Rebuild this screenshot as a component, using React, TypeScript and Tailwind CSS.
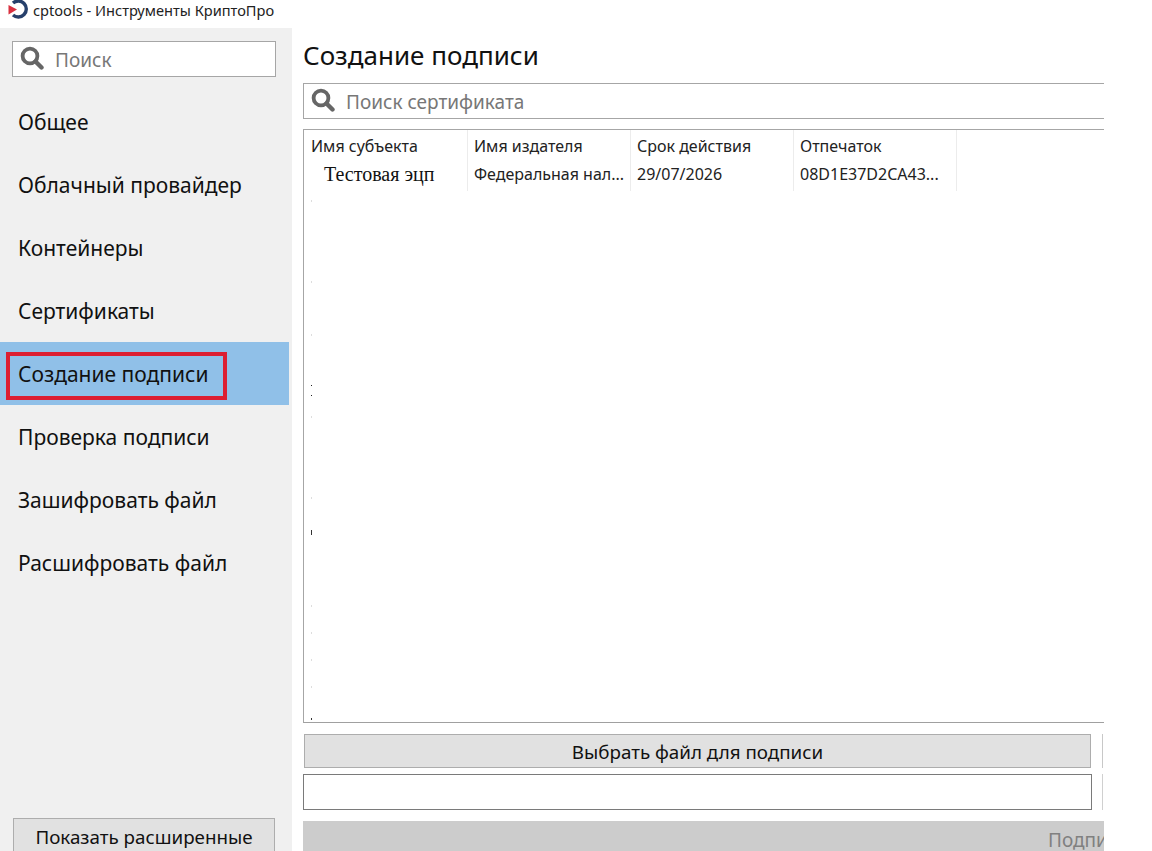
import React from 'react';

const navItems = [
  'Общее',
  'Облачный провайдер',
  'Контейнеры',
  'Сертификаты',
  'Создание подписи',
  'Проверка подписи',
  'Зашифровать файл',
  'Расшифровать файл',
];

const columns = [
  { title: 'Имя субъекта', value: 'Тестовая эцп', serif: true },
  { title: 'Имя издателя', value: 'Федеральная нал...', serif: false },
  { title: 'Срок действия', value: '29/07/2026', serif: false },
  { title: 'Отпечаток', value: '08D1E37D2CA43...', serif: false },
];

// stray marks along the left edge of the table
const specks = [
  { top: 70, height: 2, color: '#dddddd' },
  { top: 151, height: 2, color: '#dddddd' },
  { top: 204, height: 2, color: '#dddddd' },
  { top: 255, height: 1, color: '#222222' },
  { top: 265, height: 1, color: '#222222' },
  { top: 286, height: 2, color: '#dddddd' },
  { top: 367, height: 2, color: '#dddddd' },
  { top: 400, height: 5, color: '#333333' },
  { top: 475, height: 2, color: '#dddddd' },
  { top: 502, height: 2, color: '#dddddd' },
  { top: 529, height: 2, color: '#dddddd' },
  { top: 556, height: 2, color: '#dddddd' },
  { top: 588, height: 2, color: '#333333' },
];

function SearchIcon() {
  return (
    <svg width="24" height="24" viewBox="0 0 24 24" fill="none" className="shrink-0 -mt-[3px]">
      <circle cx="10" cy="10" r="7.4" stroke="#666666" strokeWidth="3.8" />
      <line x1="15.5" y1="15.5" x2="21.5" y2="21.5" stroke="#666666" strokeWidth="4.4" strokeLinecap="round" />
    </svg>
  );
}

function AppLogo() {
  return (
    <svg width="22" height="20" viewBox="0 0 22 20" fill="none" className="shrink-0">
      <path d="M6 3 A8 8 0 1 1 6 15" stroke="#27406b" strokeWidth="3.4" fill="none" />
      <path d="M1.5 5 L10 9.5 L1.5 14.5 Z" fill="#d9303f" />
    </svg>
  );
}

export default function App() {
  return (
    <div className="w-[1152px] h-[851px] overflow-hidden bg-white text-[#111111] font-['Noto_Sans','Open_Sans',sans-serif]">
      <div className="h-[28px] flex items-start pl-[7px] gap-[4px] text-[14.6px] leading-[20px] text-[#222222]">
        <AppLogo />
        <span>cptools - Инструменты КриптоПро</span>
      </div>

      <div className="flex h-[823px]">
        <aside className="w-[292px] shrink-0 bg-[#f0f0f0] flex flex-col">
          <div className="mt-[13px] mx-[12px] w-[264px] h-[36px] bg-white border border-[#a6a6a6] flex items-center pl-[7px] gap-[11px]">
            <SearchIcon />
            <span className="pt-[2px] text-[19px] text-[#777777]">Поиск</span>
          </div>

          <nav className="mt-[13px] flex flex-col">
            {navItems.map((item, i) => (
              <div
                key={item}
                className={
                  i === 4
                    ? 'relative h-[63px] w-[289px] bg-[#90c0e8] flex items-center pl-[18px] pt-[2px] text-[21px]'
                    : 'h-[63px] flex items-center pl-[18px] pt-[2px] text-[21px]'
                }
              >
                {item}
                {i === 4 && (
                  <div className="absolute left-[6px] top-[10px] w-[221px] h-[48px] border-[4px] border-[#dc1e32]" />
                )}
              </div>
            ))}
          </nav>

          <div className="mt-auto mx-[13px] w-[262px] h-[34px] -mb-[1px] bg-[#e1e1e1] border border-[#adadad] border-b-0 flex items-start justify-center pt-[4px] text-[18.8px] leading-[28px]">
            Показать расширенные
          </div>
        </aside>

        <main className="w-[812px] shrink-0 pl-[11px] overflow-hidden flex flex-col">
          <h1 className="h-[55px] shrink-0 text-[26px] leading-[54px] font-normal">Создание подписи</h1>

          <div className="w-[900px] h-[36px] shrink-0 border border-[#a6a6a6] flex items-center pl-[7px] gap-[11px]">
            <SearchIcon />
            <span className="pt-[2px] text-[19px] text-[#777777]">Поиск сертификата</span>
          </div>

          <div className="relative mt-[10px] w-[900px] h-[594px] shrink-0 border border-[#a6a6a6] border-b-[#a0a0a0]">
            <div className="flex h-[61px] pl-[1px]">
              {columns.map((col) => (
                <div key={col.title} className="w-[163px] border-r border-[#ececec] pl-[6px] text-[16px] text-[#222222]">
                  <div className="h-[30px] leading-[32px]">{col.title}</div>
                  <div
                    className={
                      col.serif
                        ? "h-[26px] pl-[13px] leading-[28px] font-['Liberation_Serif',serif] text-[20px] text-[#111111]"
                        : 'h-[26px] leading-[28px]'
                    }
                  >
                    {col.value}
                  </div>
                </div>
              ))}
            </div>
            {specks.map((s) => (
              <div
                key={s.top}
                className="absolute left-[7px] w-[1px]"
                style={{ top: s.top, height: s.height, backgroundColor: s.color }}
              />
            ))}
          </div>

          <div className="mt-[11px] flex w-[900px] shrink-0">
            <div className="ml-[1px] w-[787px] h-[34px] pt-[3px] bg-[#e1e1e1] border border-[#adadad] flex items-center justify-center text-[18.8px]">
              Выбрать файл для подписи
            </div>
            <div className="ml-[11px] w-[60px] h-[34px] border-l border-[#c8c8c8]" />
          </div>

          <div className="mt-[6px] flex w-[900px] shrink-0">
            <div className="w-[789px] h-[36px] bg-white border border-[#7a7a7a]" />
            <div className="ml-[10px] w-[60px] h-[36px] border-l border-[#d0d0d0]" />
          </div>

          <div className="mt-[11px] w-[900px] h-[40px] shrink-0 bg-[#cccccc] pl-[745px] text-[19px] leading-[38px] text-[#808080]">
            Подписать
          </div>
        </main>
      </div>
    </div>
  );
}
